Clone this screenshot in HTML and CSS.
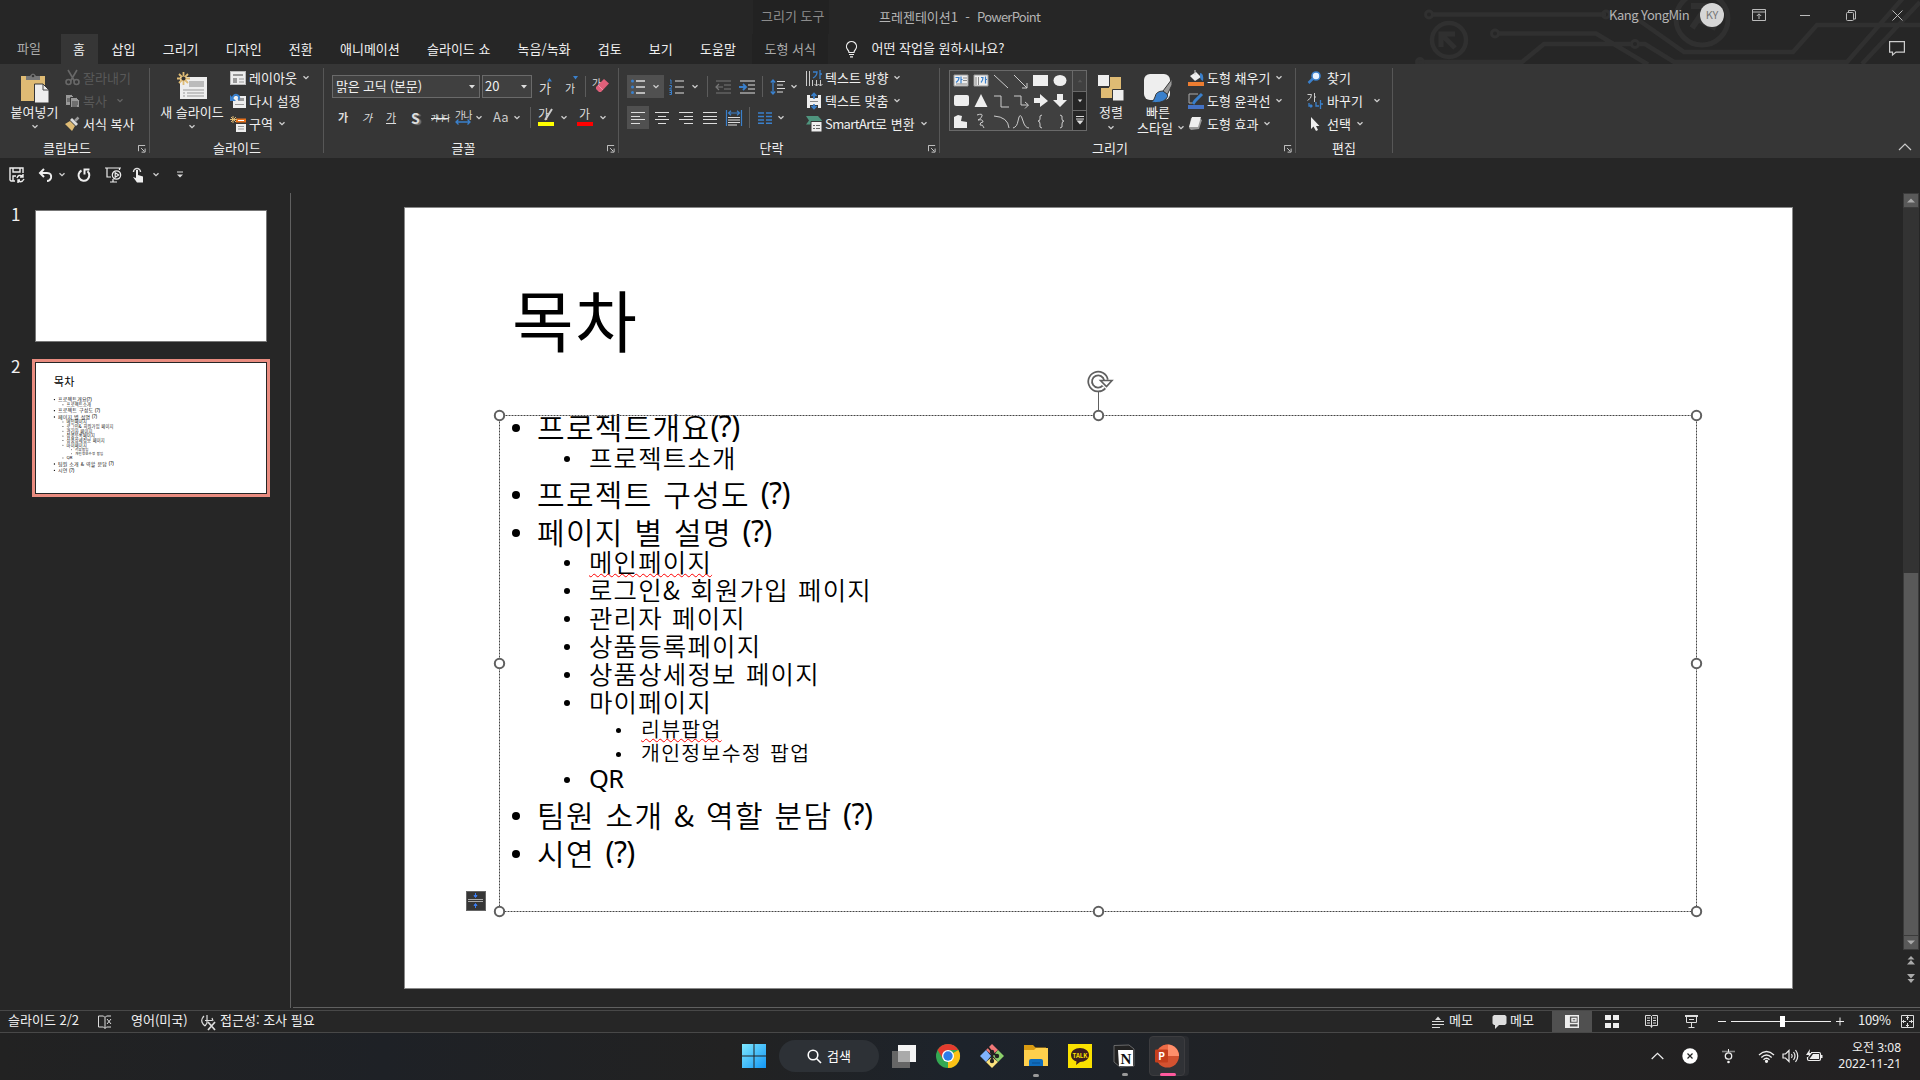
FILE: index.html
```html
<!DOCTYPE html>
<html lang="ko">
<head>
<meta charset="utf-8">
<title>프레젠테이션1 - PowerPoint</title>
<link rel="stylesheet" href="styles.css">
</head>
<body>
<svg class="defs" aria-hidden="true">
  <symbol id="chev" viewBox="0 0 8 6"><path d="M1.5 1.2 4 3.7 6.500 1.200" fill="none" stroke="#d0d0d0" stroke-width="1.300"/></symbol>
  <symbol id="launch" viewBox="0 0 9 9"><path d="M.5 7V.5H8M3.500 3.500 7 7M8 4v4H4" fill="none" stroke="#d8d8d8"/></symbol>
  <symbol id="tri" viewBox="0 0 8 5"><path d="M1 .5h6L4 4z" fill="#ddd"/></symbol>
</svg>

<header class="top">
  <svg class="circuit" viewBox="0 0 680 64" fill="none" stroke="#303030" stroke-width="4.500">
    <path d="M193 14.500H366M390 14l54 38h109l24-27h103M259 33.500h97l52 31M176 62h106l22-18H391M399 44h6l29 18h173L663-2M622 64 680 2"/>
    <circle cx="189" cy="14.500" r="3.500" stroke-width="3"/><circle cx="255" cy="33.500" r="3.500" stroke-width="3"/><circle cx="395" cy="44" r="3.500" stroke-width="3"/><circle cx="180" cy="62" r="3.500" stroke-width="3"/><circle cx="366" cy="14.500" r="3.500" stroke-width="3"/>
    <circle cx="209" cy="40" r="17"/><path d="M201 47V34h14M202 35l13 13" stroke-width="5"/>
    <circle cx="462" cy="19" r="26" stroke-width="5"/><path d="M451 6h17v15M467 6 452 28M460 20l16 8" stroke-width="6"/>
  </svg>
  <div class="titlebar">
    <span class="ctx-title">그리기 도구</span>
    <span class="doc">프레젠테이션1 &nbsp;-&nbsp; <span class="tight">PowerPoint</span></span>
    <span class="user">Kang YongMin</span>
    <span class="avatar">KY</span>
    <svg width="14" height="12" viewBox="0 0 14 12" fill="none" stroke="#bbb"><path d="M.5.5h13v11H.5zM.5 3h13M7 10V5M4.800 7 7 4.800 9.200 7"/></svg>
    <svg width="10" height="12" viewBox="0 0 10 12"><path d="M0 6.500h10" stroke="#bbb"/></svg>
    <svg width="10" height="11" viewBox="0 0 10 11" fill="none" stroke="#bbb"><rect x=".5" y="2.500" width="7" height="8" rx="1"/><path d="M2.500 2V.5H8Q9.500.5 9.500 2v7H8"/></svg>
    <svg width="11" height="11" viewBox="0 0 11 11"><path d="m.5.5 10 10m0-10-10 10" stroke="#bbb"/></svg>
  </div>
  <nav class="tabs">
    <span class="tab file">파일</span><span class="tab on">홈</span><span class="tab">삽입</span><span class="tab">그리기</span><span class="tab">디자인</span><span class="tab">전환</span><span class="tab">애니메이션</span><span class="tab">슬라이드 쇼</span><span class="tab">녹음/녹화</span><span class="tab">검토</span><span class="tab">보기</span><span class="tab">도움말</span><span class="tab shape">도형 서식</span>
    <svg class="bulb" width="13" height="17" viewBox="0 0 13 17" fill="none" stroke="#eee" stroke-width="1.200"><path d="M4 11.500Q4 10 2.500 8.500A5 5 0 1 1 10.500 8.500Q9 10 9 11.500zM4 13.500h5M5 15.800h3"/></svg>
    <span class="ask">어떤 작업을 원하시나요?</span>
    <svg class="comment" width="16" height="15" viewBox="0 0 16 15" fill="none" stroke="#ccc" stroke-width="1.200"><path d="M.6.6h14.800v10.500H7L3.500 14V11.100H.6z"/></svg>
  </nav>
</header>

<section class="ribbon">
  <div class="group g-clip">
    <div class="body">
      <div class="big">
        <svg width="28" height="30" viewBox="0 0 28 30"><rect y="3" width="24" height="25" fill="#dfbb74"/><path d="M5 7V3h4Q12-2 15 3h4v4z" fill="#777"/><circle cx="12" cy="3" r="1.300" fill="#363636"/><path d="M13.500 11H22l6 6v13H13.500z" fill="#eee" stroke="#363636"/><path d="M22 11v6h6" fill="none" stroke="#444"/></svg>
        <span>붙여넣기</span><svg class="ch"><use href="#chev"/></svg>
      </div>
      <div class="rows">
        <div class="r off"><svg width="15" height="16" viewBox="0 0 15 16" fill="none" stroke="#686868" stroke-width="1.600"><path d="m3 0 6.500 11M12 0 5.500 11"/><circle cx="3.500" cy="12" r="2.500"/><circle cx="11.500" cy="12" r="2.500"/></svg><span>잘라내기</span></div>
        <div class="r off copy"><svg width="15" height="14" viewBox="0 0 15 14" fill="#999" stroke="#363636"><path d="M.5.5h6l3 3v8h-9z"/><path d="M5.500 3.500h6l3 3v7h-9z"/><path d="M7 8h6M7 10h6M7 12h5M2 5h3M2 7h3" stroke="#444"/></svg><span>복사</span><svg class="ch"><use href="#chev"/></svg></div>
        <div class="r"><svg width="15" height="14" viewBox="0 0 15 14"><path d="m0 7 5-3 5 5-3 5z" fill="#dfbb74"/><path d="m5 3 2-2 6 6-2 2z" fill="#ddd"/><path d="m10 4 3.500-3.500" stroke="#999" stroke-width="2.500"/></svg><span>서식 복사</span></div>
      </div>
    </div>
    <div class="label">클립보드<svg class="la"><use href="#launch"/></svg></div>
  </div>

  <div class="group g-slide">
    <div class="body">
      <div class="big">
        <svg width="31" height="29" viewBox="0 0 31 29"><rect x="3" y="5" width="27" height="22" fill="#eee"/><path d="M12 9h15v6H12z" fill="#bbb"/><path d="M6 18h21M6 21h2m2 0h17M6 24h2m2 0h17" stroke="#999"/><path d="M6.500 0v13M0 6.500h13M2 2l9 9m0-9-9 9" stroke="#dfbb74" stroke-width="1.800"/><circle cx="6.500" cy="6.500" r="2" fill="#333"/></svg>
        <span>새 슬라이드</span><svg class="ch"><use href="#chev"/></svg>
      </div>
      <div class="rows">
        <div class="r"><svg width="16" height="14" viewBox="0 0 16 14"><path d="M0 0h16v14H0z" fill="#bbb"/><path d="M1 1h14v12H1z" fill="#eee"/><path d="M3 3h10v2H3zM3 7h4v5H3z" fill="#999"/><path d="M9 8h5M9 11h5" stroke="#999"/></svg><span>레이아웃</span><svg class="ch"><use href="#chev"/></svg></div>
        <div class="r"><svg width="16" height="15" viewBox="0 0 16 15"><path d="M3 3h13v12H3z" fill="#eee"/><path d="M8 5h6v3H8zM5 11h9v1H5z" fill="#999"/><path d="M2 6Q4 0 8 2.500 10 4 8.500 7" fill="none" stroke="#3a80cc" stroke-width="2"/><path d="M0 2v6h6z" fill="#3a80cc"/></svg><span>다시 설정</span></div>
        <div class="r"><svg width="16" height="16" viewBox="0 0 16 16"><path d="M6 8h10v8H6z" fill="#eee"/><path d="M8 10.500h6M8 13h6" stroke="#999"/><path d="M6 2.500h10v4H6z" fill="#e8701a"/><path d="M8 4.500h6" stroke="#fff"/><path d="M3 0v7M0 3.500h7M1 1l5 5m0-5L1 6" stroke="#dfbb74"/></svg><span>구역</span><svg class="ch"><use href="#chev"/></svg></div>
      </div>
    </div>
    <div class="label">슬라이드</div>
  </div>

  <div class="group g-font">
    <div class="line l1">
      <div class="combo name"><span>맑은 고딕 (본문)</span><svg class="ch"><use href="#tri"/></svg></div>
      <div class="combo size"><span>20</span><svg class="ch"><use href="#tri"/></svg></div>
      <span class="ga grow">가<svg width="5" height="4" viewBox="0 0 5 4"><path d="M0 3.500h5L2.500 0z" fill="#3a80cc"/></svg></span>
      <span class="ga shrink">가<svg width="5" height="4" viewBox="0 0 5 4"><path d="M0 0h5L2.500 3.500z" fill="#3a80cc"/></svg></span>
      <i class="sep"></i>
      <span class="ga clear">가<svg width="13" height="13" viewBox="0 0 13 13"><path d="m0 8 8-8 5 4.500L5 13H3L0 10z" fill="#e0607a"/><path d="m2 6 5 5" stroke="#f0a0b0" stroke-width=".8"/></svg></span>
    </div>
    <div class="line l2">
      <b class="ga">가</b><em class="ga">가</em><u class="ga">가</u><b class="shadow">S</b><s class="strike">가나다</s>
      <span class="ga spacing">가나<svg width="16" height="6" viewBox="0 0 16 6"><path d="M1 3h14M3.500.5 1 3l2.500 2.500M12.500.5 15 3l-2.500 2.500" fill="none" stroke="#3a80cc" stroke-width="1.300"/></svg></span><svg class="ch"><use href="#chev"/></svg>
      <span class="aa">Aa</span><svg class="ch"><use href="#chev"/></svg>
      <i class="sep"></i>
      <span class="ga mark hl">가<svg width="8" height="13" viewBox="0 0 8 13"><path d="M7 1 2 9l-2 3" stroke="#ccc" stroke-width="2" fill="none"/></svg></span><svg class="ch"><use href="#chev"/></svg>
      <span class="ga mark red">가</span><svg class="ch"><use href="#chev"/></svg>
    </div>
    <div class="label">글꼴<svg class="la"><use href="#launch"/></svg></div>
  </div>

  <div class="group g-para">
    <div class="pair">
      <div class="pl">
        <div class="line p1">
          <span class="act wide"><svg width="15" height="15" viewBox="0 0 15 15"><path d="M5 2h9M5 8h9M5 14h9" stroke="#ddd" stroke-width="1.300"/><g fill="#3a80cc"><circle cx="1.500" cy="2" r="1.500"/><circle cx="1.500" cy="8" r="1.500"/><circle cx="1.500" cy="13.500" r="1.500"/></g></svg><svg class="ch"><use href="#chev"/></svg></span>
          <svg width="16" height="16" viewBox="0 0 16 16"><path d="M6 2h9M6 8h9M6 14h9" stroke="#ddd" stroke-width="1.200"/><path d="M1 1h1v4M.5 6.500h2v1.500l-2 2h2.500M.5 11.500h2v4h-2m0-2h2" fill="none" stroke="#3a80cc"/></svg><svg class="ch"><use href="#chev"/></svg>
          <i class="sep"></i>
          <svg width="17" height="14" viewBox="0 0 17 14" stroke="#777" fill="none" stroke-width="1.200"><path d="M1 1h15M9 5h7M9 9h7M1 13h15M1 7h7M4 4 1 7l3 3"/></svg>
          <svg width="17" height="14" viewBox="0 0 17 14" stroke="#ddd" fill="none" stroke-width="1.200"><path d="M1 1h15M9 5h7M9 9h7M1 13h15"/><path d="M0 7h7M4 4l3 3-3 3" stroke="#3a80cc" stroke-width="1.800"/></svg>
          <i class="sep"></i>
          <svg width="16" height="16" viewBox="0 0 16 16" fill="none"><path d="M7 2.500h8M7 6h6M7 9.500h8M7 13h6" stroke="#ddd"/><path d="M3 1v14M.8 3.500 3 1l2.200 2.500M.8 12.500 3 15l2.200-2.500" stroke="#3a80cc" stroke-width="1.300"/></svg><svg class="ch"><use href="#chev"/></svg>
        </div>
        <div class="line p2">
          <span class="act"><svg width="14" height="12" viewBox="0 0 14 12" stroke="#ddd"><path d="M0 .5h14M0 4.500h9M0 7.500h14M0 11.500h9"/></svg></span>
          <svg width="14" height="12" viewBox="0 0 14 12" stroke="#ddd"><path d="M0 .5h14M3 4.500h8M0 7.500h14M3 11.500h8"/></svg>
          <svg width="14" height="12" viewBox="0 0 14 12" stroke="#ddd"><path d="M0 .5h14M5 4.500h9M0 7.500h14M5 11.500h9"/></svg>
          <svg width="14" height="12" viewBox="0 0 14 12" stroke="#ddd"><path d="M0 .5h14M0 4.500h14M0 7.500h14M0 11.500h14"/></svg>
          <svg width="16" height="16" viewBox="0 0 16 16" fill="none"><path d="M.5 0v16M15.500 0v16M2.500 3h11M5 .8 2.500 3 5 5.200M11 .8 13.500 3 11 5.200" stroke="#3a80cc" stroke-width="1.200"/><path d="M2 7.500h12M2 10h12M2 12.500h12M2 15h9" stroke="#ddd"/></svg>
          <i class="sep"></i>
          <svg width="14" height="12" viewBox="0 0 14 12" stroke="#3a80cc" stroke-width="1.400"><path d="M0 1h6m2 0h6M0 4.500h6m2 0h6M0 8h6m2 0h6M0 11.200h6m2 0h6"/></svg><svg class="ch"><use href="#chev"/></svg>
        </div>
      </div>
      <div class="rows">
        <div class="r"><svg width="16" height="17" viewBox="0 0 16 17" fill="none" stroke="#ccc"><path d="M.5 1v15M3.500 1v15M6.500 10v6M10.500 10v6M14.500 10v6M8.500 14l2 2 2-2M12.500 14l2 2 2-2"/><path d="M7 2h4q0 4-4 6M14 0v9M14 4h2" stroke="#3a80cc" stroke-width="1.300"/></svg><span>텍스트 방향</span><svg class="ch"><use href="#chev"/></svg></div>
        <div class="r"><svg width="16" height="16" viewBox="0 0 16 16"><path d="M1 2h3v3h8V2h3v13h-3v-3H4v3H1z" fill="#eee"/><path d="M4 8.500h8" stroke="#888"/><path d="M8 0v6M5.500 3 8 .5 10.500 3M8 11v5M5.500 13 8 15.500l2.500-2.500" stroke="#3a80cc" stroke-width="1.700" fill="none"/></svg><span>텍스트 맞춤</span><svg class="ch"><use href="#chev"/></svg></div>
        <div class="r"><svg width="16" height="16" viewBox="0 0 16 16"><path d="M0 0h12l4 4.500-4 4H0l3-4z" fill="#4f957e"/><path d="M5 5.500h11V16H5z" fill="#eee" stroke="#363636"/><path d="M7 9.500h2m1 0h4M7 12.500h2m1 0h4" stroke="#666"/></svg><span><span class="smart">SmartArt</span>로 변환</span><svg class="ch"><use href="#chev"/></svg></div>
      </div>
    </div>
    <div class="label">단락<svg class="la"><use href="#launch"/></svg></div>
  </div>

  <div class="group g-draw">
    <div class="body">
      <div class="gallery">
        <svg width="122" height="60" viewBox="0 0 122 60" fill="none" stroke="#ccc">
          <path d="M4 4h14v11H4zM24 4h14v11H24z" fill="#eee" stroke="#999"/><path d="M5.500 6.500H9q0 3-3 5M11 5.500v7m0-4h1.500M31 6.500h2q0 3-2 5M35.500 5.500v7m0-4H37" stroke="#3a80cc" stroke-width="1.200"/><path d="M13 7h4M13 9.500h4M6 13h11M26 6v8M28.500 6v8" stroke="#888"/>
          <path d="m44 4 14 13M64 4l13 13M77 12v5h-5"/>
          <g fill="#eee" stroke="none"><rect x="83" y="4" width="15" height="11"/><ellipse cx="110" cy="9.500" rx="6.500" ry="5.500"/><rect x="4" y="24" width="15" height="11" rx="2"/><path d="m31 23 6.500 13h-13zM84 27h6v-4l8 7-8 6v-4h-6zM107 23h6v6h4l-7 7-7-7h4zM4 46l4-2 4 1-1 5 6 1v6H4z"/></g>
          <path d="M44 25h7v11h8M64 25h7v9h7M75 31l3.500 3-3.500 3.500M27 44q6-2 5 1t-4 4q5-1 5 2-3 0-3 3 3-1 4 3M44 45q14 1 15 12M63 57q4-1 5-7 2-11 5 0 2 7 6 7M92 44q-3 0-2 4 0 2-2 2 2 0 2 3-1 4 2 4M110 44q3 0 2 4 0 2 2 2-2 0-2 3 1 4-2 4"/>
        </svg>
        <div class="gs"><span class="dim"><svg class="ch" viewBox="0 0 8 5"><path d="M1 4h6L4 .5z" fill="#555"/></svg></span><span><svg class="ch"><use href="#tri"/></svg></span><span><svg width="8" height="9" viewBox="0 0 8 9"><path d="M0 .5h8M0 3h8" stroke="#ddd"/><path d="M.5 4.500h7L4 8.500z" fill="#ddd"/></svg></span></div>
      </div>
      <div class="big b1">
        <svg width="28" height="28" viewBox="0 0 28 28"><path d="M12 3h12v12H12zM4 14h12v10H4z" fill="#dfbb74"/><path d="M.5.5h12v12H.5zM15.500 15.500h11.500v11.500H15.500z" fill="#eee" stroke="#363636"/></svg>
        <span>정렬</span><svg class="ch"><use href="#chev"/></svg>
      </div>
      <div class="big b2">
        <svg width="30" height="30" viewBox="0 0 30 30"><rect x="1" y="1" width="26" height="26" rx="6" fill="#eee"/><path d="m29 6-9 12 4 4 5-10z" fill="#999" stroke="#363636"/><path d="M20 18q-7 0-8 6-1 4-4 5 10 2 15-3 3-3 1-5z" fill="#3a80cc" stroke="#363636"/></svg>
        <span>빠른</span><span class="two">스타일<svg class="ch"><use href="#chev"/></svg></span>
      </div>
      <div class="rows">
        <div class="r"><svg width="16" height="16" viewBox="0 0 16 16"><path d="M0 12h16v4H0z" fill="#ed7d31"/><path d="m2 6 6-4 5 5-6 4z" fill="#eee"/><path d="M7 5V0" stroke="#ccc"/><path d="M12 3q4 0 3 8-3-1-3-5z" fill="#3a80cc"/></svg><span>도형 채우기</span><svg class="ch"><use href="#chev"/></svg></div>
        <div class="r"><svg width="16" height="16" viewBox="0 0 16 16"><path d="M0 12h16v4H0z" fill="#4472c4"/><path d="M10 1H1v9h3" stroke="#aaa" fill="none"/><path d="m14 1-7 7-2 3" stroke="#3a80cc" stroke-width="3" fill="none"/></svg><span>도형 윤곽선</span><svg class="ch"><use href="#chev"/></svg></div>
        <div class="r"><svg width="16" height="14" viewBox="0 0 16 14"><path d="M3 1h8l3 2-3 9-8 1-2-2z" fill="#999"/><path d="M4 0h9l-3 10H1z" fill="#eee"/></svg><span>도형 효과</span><svg class="ch"><use href="#chev"/></svg></div>
      </div>
    </div>
    <div class="label">그리기<svg class="la"><use href="#launch"/></svg></div>
  </div>

  <div class="group g-edit">
    <div class="body">
      <div class="rows">
        <div class="r"><svg width="16" height="14" viewBox="0 0 16 14"><path d="m1.500 12 5-5" stroke="#3a80cc" stroke-width="2.500"/><circle cx="9" cy="5" r="4" fill="#e8f2ff" stroke="#3a80cc" stroke-width="1.600"/></svg><span>찾기</span></div>
        <div class="r far"><svg width="16" height="16" viewBox="0 0 16 16" fill="none" stroke="#ccc"><path d="M.5 1.500h4q0 4-4 6M7.500 0v9m0-5H9"/><path d="M9 9v4h3M13.500 7v9m0-5H16M2 10v3h3M3.500 11.500 5 13l-1.500 1.500" stroke="#3a80cc" stroke-width="1.300"/></svg><span>바꾸기</span><svg class="ch"><use href="#chev"/></svg></div>
        <div class="r"><svg width="16" height="16" viewBox="0 0 16 16"><path d="M4 1v12l2.500-2.500L9 15l2-1-2-4h3.500z" fill="#eee"/></svg><span>선택</span><svg class="ch"><use href="#chev"/></svg></div>
      </div>
    </div>
    <div class="label">편집</div>
  </div>
  <svg class="collapse" width="14" height="8" viewBox="0 0 14 8"><path d="m1 7 6-6 6 6" fill="none" stroke="#ccc" stroke-width="1.200"/></svg>
</section>

<section class="qat">
  <svg width="16" height="16" viewBox="0 0 16 16" fill="none" stroke="#eee" stroke-width="1.400"><path d="M6 14H2L1 13V1h13v5M4 1v4h7V1M4 14V9h3"/><path d="M8 11q1-4 6-2m0-2v3h-3M15 12q-2 4-6 2m0 2v-3h2"/></svg>
  <svg width="15" height="14" viewBox="0 0 15 14" fill="none" stroke="#eee" stroke-width="2"><path d="M2 5h7q5 0 4 5-1 3-4 3M6 1 2 5l4 4"/></svg>
  <svg class="ch"><use href="#chev"/></svg>
  <svg width="14" height="14" viewBox="0 0 14 14" fill="none" stroke="#eee" stroke-width="2"><path d="M4.500 2.500a5.400 5.400 0 1 0 6 .8M7.500 6.500V1.500h5"/></svg>
  <svg width="17" height="16" viewBox="0 0 17 16" fill="none" stroke="#eee" stroke-width="1.200"><path d="M0 1h16M2 1v9h4M14.500 1v2M5 15h7M8 12v3"/><circle cx="11.500" cy="8" r="4.200"/><path d="m10.200 5.800 3.500 2.200-3.500 2.200z"/></svg>
  <svg width="12" height="17" viewBox="0 0 12 17"><path d="M1.500 6a3.500 3.500 0 1 1 7 0" fill="none" stroke="#ddd" stroke-width="1.500"/><path d="M4 4h2v5l5 1.500v6H5L1 11l3 1z" fill="#eee"/></svg>
  <svg class="ch"><use href="#chev"/></svg>
  <svg width="6" height="7" viewBox="0 0 6 7"><path d="M0 1h6" stroke="#ddd"/><path d="M0 3.500h6L3 6.500z" fill="#ddd"/></svg>
</section>

<main class="work">
  <aside class="thumbs">
    <span class="num">1</span><div class="thumb"></div>
    <span class="num second">2</span>
    <div class="thumb sel"><div class="mini"><div class="content">
      <h1>목차</h1>
      <ul>
        <li class="a">프로젝트개요<q>(?)</q></li><li class="b">프로젝트소개</li><li class="a">프로젝트 구성도 <q>(?)</q></li><li class="a">페이지 별 설명 <q>(?)</q></li>
        <li class="b">메인페이지</li><li class="b">로그인&amp; 회원가입 페이지</li><li class="b">관리자 페이지</li><li class="b">상품등록페이지</li><li class="b">상품상세정보 페이지</li><li class="b">마이페이지</li>
        <li class="c">리뷰팝업</li><li class="c">개인정보수정 팝업</li><li class="b"><q>QR</q></li><li class="a">팀원 소개 &amp; 역할 분담 <q>(?)</q></li><li class="a">시연 <q>(?)</q></li>
      </ul>
    </div></div></div>
  </aside>
  <div class="stage">
    <div class="slide">
      <div class="content">
        <h1>목차</h1>
        <ul>
          <li class="a">프로젝트개요<q>(?)</q></li><li class="b">프로젝트소개</li><li class="a">프로젝트 구성도 <q>(?)</q></li><li class="a">페이지 별 설명 <q>(?)</q></li>
          <li class="b"><span class="err">메인페이지</span></li><li class="b">로그인&amp; 회원가입 페이지</li><li class="b">관리자 페이지</li><li class="b">상품등록페이지</li><li class="b">상품상세정보 페이지</li><li class="b">마이페이지</li>
          <li class="c"><span class="err">리뷰팝업</span></li><li class="c">개인정보수정 팝업</li><li class="b"><q>QR</q></li><li class="a">팀원 소개 &amp; 역할 분담 <q>(?)</q></li><li class="a">시연 <q>(?)</q></li>
        </ul>
      </div>
      <svg class="selection" width="1240" height="560" viewBox="0 0 1240 560" fill="none" stroke="#606060">
        <path d="M29.500 45.500h1197v496h-1197z" stroke="#444" stroke-dasharray="2 1"/>
        <path d="M628.500 20v20"/>
        <g fill="#fff" stroke-width="2"><circle cx="29.500" cy="45.500" r="4.700"/><circle cx="628.500" cy="45.500" r="4.700"/><circle cx="1226.500" cy="45.500" r="4.700"/><circle cx="29.500" cy="293.500" r="4.700"/><circle cx="1226.500" cy="293.500" r="4.700"/><circle cx="29.500" cy="541.500" r="4.700"/><circle cx="628.500" cy="541.500" r="4.700"/><circle cx="1226.500" cy="541.500" r="4.700"/></g>
        <path d="M634 17a8 8 0 1 1 2-7" stroke-width="5.500"/><path d="M634 17a8 8 0 1 1 2-7" stroke="#fff" stroke-width="2"/><path d="M630.500 10.500h11.500l-5.500 6z" fill="#fff" stroke-width="1.600"/>
      </svg>
      <svg class="autofit" width="20" height="20" viewBox="0 0 20 20"><rect x=".5" y=".5" width="19" height="19" fill="#363636" stroke="#666"/><path d="M2 8.500h15M2 10.500h15" stroke="#aaa"/><path d="M9.500 2v4M8 4.500l1.500 2 1.500-2zM9.500 17v-4M8 14.500l1.500-2 1.500 2z" stroke="#3a7cf0" fill="#3a7cf0"/></svg>
    </div>
    <div class="scroll">
      <span class="sb"><svg width="8" height="5" viewBox="0 0 8 5"><path d="M0 4.500h8L4 .5z" fill="#aaa"/></svg></span>
      <span class="track"></span><span class="knob"></span>
      <span class="sb"><svg width="8" height="5" viewBox="0 0 8 5"><path d="M0 .5h8L4 4.500z" fill="#aaa"/></svg></span>
      <svg class="pg" width="8" height="9" viewBox="0 0 8 9" fill="#aaa"><path d="M4 0 7.500 3.500h-7zM4 4l4 4.500H0z"/></svg>
      <svg class="pg" width="8" height="9" viewBox="0 0 8 9" fill="#aaa"><path d="M0 0h8L4 4.500zM.5 5h7L4 9z"/></svg>
    </div>
  </div>
</main>

<footer class="status">
  <span>슬라이드 2/2</span>
  <svg width="15" height="14" viewBox="0 0 15 14" fill="none" stroke="#ddd"><path d="M7 2.500 5.500 1H.5v11h5L7 13.500V2.500L8.500 1H13M7 13.500 8.500 12H13M9 4l4 5m0-5-4 5"/></svg>
  <span>영어(미국)</span>
  <svg width="17" height="16" viewBox="0 0 17 16" fill="none" stroke="#ddd" stroke-width="1.200"><path d="M4 2q-4 4-1 8l2 2M7 1v4M5 6.500h7M7 5v4l-2 3M12 4l1 3"/><path d="m8 8 7 8m0-8-7 8" stroke-width="1.700"/></svg>
  <span>접근성: 조사 필요</span>
  <svg width="12" height="12" viewBox="0 0 12 12"><path d="M3 4h6L6 .5z" fill="#ddd"/><path d="M0 5.500h12M0 8.500h12M0 11.500h8" stroke="#ddd"/></svg>
  <span>메모</span>
  <svg width="15" height="14" viewBox="0 0 15 14"><path d="M2 0h11l1.500 1.500v7L13 10H7l-4 4v-4H2L.5 8.500v-7z" fill="#ddd"/></svg>
  <span>메모</span>
  <span class="view"><svg width="14" height="13" viewBox="0 0 14 13" fill="none" stroke="#eee" stroke-width="1.400"><path d="M.7.7h12.600v11.600H.7zM4 1v11M4 8.500h9"/><path d="M1 1h3v11H1z" fill="#eee"/><path d="M7 3.500h4v2.500H7z"/></svg></span>
  <svg width="14" height="13" viewBox="0 0 14 13" fill="#eee"><path d="M0 0h6v5H0zM8 0h6v5H8zM0 8h6v5H0zM8 8h6v5H8z"/></svg>
  <svg width="13" height="13" viewBox="0 0 13 13" fill="none" stroke="#ddd"><path d="M.5.5h5l1 1 1-1h5v10h-5l-1 2-1-2h-5zM6.500 1v11M2 3h3M2 5.500h3M2 8h3M8 3h3M8 5.500h3M8 8h3"/></svg>
  <svg width="13" height="13" viewBox="0 0 13 13" fill="none" stroke="#ddd"><path d="M0 1h13" stroke-width="2"/><path d="M1.500 1v6.500h10V1M4 4.500h5M6.500 8v4M3.500 12.500h6"/></svg>
  <svg width="8" height="12" viewBox="0 0 8 12"><path d="M0 5.500h8" stroke="#eee"/></svg>
  <span class="slider"><i></i></span>
  <svg width="8" height="12" viewBox="0 0 8 12"><path d="M0 5.500h8M4 1.500v8" stroke="#eee"/></svg>
  <span class="pct">109%</span>
  <svg width="13" height="13" viewBox="0 0 13 13" fill="none" stroke="#ddd"><path d="M.5.5h12v12H.5zM6.500 1v4M5 3l1.500-1.500L8 3M6.500 12V8M5 10l1.500 1.500L8 10M1 6.500h4M3 5 1.500 6.500 3 8M12 6.500H8M10 5l1.500 1.500L10 8"/></svg>
</footer>

<footer class="taskbar">
  <svg width="24" height="24" viewBox="0 0 24 24"><defs><linearGradient id="win" x2="1" y2="1"><stop stop-color="#7ee8ff"/><stop offset="1" stop-color="#1296f5"/></linearGradient></defs><path d="M0 0h11.500v11.500H0zM12.500 0H24v11.500H12.500zM0 12.500h11.500V24H0zM12.500 12.500H24V24H12.500z" fill="url(#win)"/></svg>
  <span class="search"><svg width="15" height="15" viewBox="0 0 15 15" fill="none" stroke="#fff" stroke-width="1.600"><circle cx="6" cy="6" r="4.800"/><path d="m9.500 9.500 4.500 4.500"/></svg>검색</span>
  <svg width="24" height="23" viewBox="0 0 24 23"><path d="M0 6h18v17H0z" fill="#666"/><path d="M6 0h18v17H6z" fill="#f4f4f4"/><path d="M6 6h12v11H6z" fill="#aaa"/></svg>
  <svg width="24" height="24" viewBox="0 0 24 24"><circle cx="12" cy="12" r="12" fill="#34a853"/><path d="M12 12V24A12 12 0 0 0 22.400 6z" fill="#fbc116"/><path d="M1.600 6a12 12 0 0 1 20.800 0H12l-5 9z" fill="#e33b2e"/><circle cx="12" cy="12" r="6" fill="#fff"/><circle cx="12" cy="12" r="4.700" fill="#2b7de9"/></svg>
  <svg width="24" height="24" viewBox="0 0 24 24"><path d="m12 0 6 6-6 5-6-5z" fill="#f27878"/><path d="m24 12-6 6-5-6 5-6z" fill="#8ccf6b"/><path d="m12 24-6-6 6-5 6 5z" fill="#fae17d"/><path d="m0 12 6-6 5 6-5 6z" fill="#80b3ff"/><path d="m8 3 4 5v10M12 8l6 5" stroke="#222" stroke-width="1.800" fill="none"/><g fill="#222"><circle cx="12" cy="8" r="2.200"/><circle cx="12" cy="17" r="2.200"/><circle cx="17" cy="12" r="2.200"/></g></svg>
  <span class="app"><svg width="24" height="22" viewBox="0 0 24 22"><path d="M0 0h9l2.500 2.500H22v6H0z" fill="#d99b12"/><path d="M0 5h10l2-2h12v18H0z" fill="#ffd04c"/><path d="M5 21v-5q0-2 2-2h10q2 0 2 2v5z" fill="#0f6cbd"/><path d="M8 18h8" stroke="#0a4f92"/></svg></span>
  <svg width="24" height="24" viewBox="0 0 24 24"><path d="M0 0h24v24H0z" fill="#fae100"/><path d="M12 4c5 0 9 3 9 7s-4 7-9 7l-4 3 .5-3.500C5 16.500 3 14 3 11c0-4 4-7 9-7z" fill="#3b1e1e"/><text x="12" y="13.500" font-size="6" font-weight="700" text-anchor="middle" fill="#fae100">TALK</text></svg>
  <span class="app"><svg width="22" height="24" viewBox="0 0 22 24"><path d="M1 1.500 16 1l5 4v17l-14 1-6-5z" fill="#222" stroke="#888" stroke-width=".7"/><path d="M5 6h15v16H6z" fill="#fff"/><text x="12.800" y="19.500" font-size="15" font-family="Liberation Serif" font-weight="700" text-anchor="middle" fill="#111">N</text></svg></span>
  <span class="app live"><svg width="24" height="24" viewBox="0 0 24 24"><circle cx="12.500" cy="12" r="11.500" fill="#d35230"/><path d="M13 .5A11.500 11.500 0 0 1 24 12H13z" fill="#ff8f6b"/><path d="M13 .5A11.500 11.500 0 0 0 1.500 12H13z" fill="#ed6c47"/><rect y="5.500" width="13" height="13" rx="1" fill="#c43e1c"/><text x="6.500" y="15.500" font-size="10" font-weight="700" text-anchor="middle" fill="#fff">P</text></svg></span>
  <svg width="13" height="8" viewBox="0 0 13 8"><path d="m.7 7 5.800-5.700L12.300 7" fill="none" stroke="#eee" stroke-width="1.200"/></svg>
  <svg width="16" height="16" viewBox="0 0 16 16"><circle cx="8" cy="8" r="7.700" fill="#fff"/><path d="m5.500 5.500 5 5m0-5-5 5" stroke="#222" stroke-width="1.200"/></svg>
  <svg width="13" height="16" viewBox="0 0 13 16" fill="none"><path d="M0 3.500h13" stroke="#888" stroke-width="1.600"/><path d="M6.500 1v3" stroke="#eee"/><circle cx="6.500" cy="8" r="3.200" stroke="#eee" stroke-width="1.300"/><circle cx="6.500" cy="14" r="1.300" fill="#eee"/></svg>
  <svg width="17" height="13" viewBox="0 0 17 13" fill="none" stroke="#eee" stroke-width="1.300"><path d="M1 5q7.500-7 15 0M3.300 7.500q5.200-5 10.400 0M5.500 9.800q3-3 6 0"/><circle cx="8.500" cy="11.300" r="1" fill="#eee"/></svg>
  <svg width="17" height="14" viewBox="0 0 17 14" fill="none" stroke="#eee" stroke-width="1.200"><path d="M1 5h2.500L7 1.500v11L3.500 9H1zM9.500 5q1.500 2 0 4M11.500 3q3 4 0 8M13.500 1q4.500 6 0 12"/></svg>
  <svg width="17" height="14" viewBox="0 0 17 14"><path d="M5 3.500h8q1.500 0 1.500 1.500v5q0 1.500-1.500 1.500H3Q1.500 11.500 1.500 10V8" fill="none" stroke="#eee" stroke-width="1.200"/><path d="M7 5h6v5H3.500z" fill="#eee"/><path d="M15 6h1.500v3H15z" fill="#eee"/><path d="M4 0 0 6h3L2 9l4-5H3.500z" fill="#eee"/></svg>
  <span class="clock">오전 3:08<br>2022-11-21</span>
</footer>
</body>
</html>
```
FILE: styles.css
```css
* { box-sizing: border-box; }
body { margin: 0; width: 1920px; height: 1080px; overflow: hidden; background: #262626; color: #f0f0f0; font: 13px/16px "Noto Sans CJK KR", "Noto Sans", sans-serif; white-space: nowrap; display: flex; flex-direction: column; }
svg { display: block; flex: none; overflow: visible; }
.defs { position: absolute; width: 0; height: 0; }
.ch { width: 8px; height: 6px; }

/* title and tabs */
.top { position: relative; height: 64px; }
.circuit { position: absolute; left: 1240px; top: 0; width: 680px; height: 64px; overflow: hidden; }
.titlebar { position: relative; height: 34px; display: grid; grid-template-columns: 126px 730px 91px 52px 48px 46px 46px auto; padding-left: 753px; align-items: center; color: #b4b4b4; }
.titlebar > * { margin-top: -4px; }
.titlebar > .ctx-title { margin-top: 0; align-self: stretch; width: 76px; padding: 8px 0 0 8px; background: #222; color: #8c8c8c; }
.titlebar .doc { margin-top: 0; }
.tight { letter-spacing: -.75px; }
.user { letter-spacing: -.5px; }
.avatar { width: 24px; height: 24px; border-radius: 50%; background: #d6d6d6; color: #777; font-size: 11px; line-height: 23px; text-align: center; }
.tabs { position: relative; height: 30px; display: flex; }
.tab { padding: 0 13.6px; line-height: 29px; }
.file { width: 61px; padding-left: 17px; line-height: 28px; color: #aaa; }
.on { width: 37px; padding: 0 12px; background: #363636; }
.tab.shape { width: 76px; margin-left: 3px; padding: 0 12px; background: #222; color: #aaa; }
.bulb { margin: 7px 13px 0 17px; }
.ask { line-height: 28px; }
.comment { margin: 7px 15px 0 auto; }

/* ribbon */
.ribbon { height: 94px; background: #363636; padding: 4px 0 5px; display: grid; grid-template-columns: 150px 174px 295px 321px 356px 97px 1fr; }
.group { border-right: 1px solid #575757; display: flex; flex-direction: column; }
.body, .pair { height: 72px; display: grid; }
.g-clip .body { grid-template-columns: 65px auto; }
.g-slide .body { grid-template-columns: 80px auto; }
.g-draw .body { grid-template-columns: 148px 46px 54px auto; }
.g-edit .body { padding-left: 11px; }
.pair { grid-template-columns: 187px auto; }
.label { position: relative; height: 13px; text-align: center; }
.g-clip .label { padding-right: 15px; }
.g-slide .label { padding-left: 1px; }
.g-font .label, .g-draw .label, .g-para .label { padding-right: 15px; }
.la { position: absolute; right: 3px; top: 5px; width: 8px; height: 8px; }
.big { display: flex; flex-direction: column; align-items: center; padding-top: 4px; }
.big > svg:first-child { height: 32px; }
.big > .ch { margin-top: 4px; }
.g-clip .big { padding-left: 4px; }
.g-slide .big { padding: 1px 0 0 4px; }
.g-slide .big > svg:first-child { height: 35px; }
.b1 > .ch { margin-top: 5px; }
.big.b2 { padding-right: 6px; }
.two { display: flex; align-items: center; gap: 4px; margin-left: 6px; }
.rows { display: grid; grid-template-rows: 20.5px 24px 23px; height: 68px; }
.r { display: flex; align-items: center; gap: 3px; }
.r .ch { margin-left: 2px; }
.g-edit .r { gap: 4px; }
.g-edit .r .ch { margin-left: 1px; }
.g-edit .r.far .ch { margin-left: 6px; }
.r.off { color: #595959; }
.copy .ch { margin-left: 6px; opacity: .3; }
.smart { letter-spacing: -.6px; }
.line { height: 23px; display: grid; align-items: center; justify-items: start; }
.l1 { margin: 7px 0 8px; padding-left: 8px; grid-template-columns: 150px 57px 26px 20px 7px auto; }
.l2 { height: 34px; padding: 0 0 11px 14px; grid-template-columns: 24px 24px 25px 20px 24px 20px 18px 20px 17px 8px 22px 17px 22px auto; }
.combo { display: flex; align-items: center; justify-content: space-between; height: 23px; border: 1px solid #6a6a6a; background: #404040; padding: 0 3px; }
.combo span { margin-top: -1px; }
.combo.name { width: 148px; }
.combo.name span { letter-spacing: -.2px; }
.combo.size { width: 50px; padding-left: 2px; }
.sep { width: 1px; height: 21px; background: #5c5c5c; }
.ga { position: relative; font-size: 12px; color: #ddd; }
.grow { font-size: 13px; padding-top: 2px; }
.grow svg { position: absolute; right: -1px; top: 0; }
.shrink { font-size: 11px; padding-top: 3px; }
.shrink svg { position: absolute; right: -3px; top: -1px; }
.clear { font-size: 10px; top: -4px; }
.clear svg { position: absolute; left: 4px; top: 4px; }
.l2 b.ga, .l2 em, .l2 u { font-size: 11px; top: -1px; }
.shadow { font-size: 14px; color: #ddd; text-shadow: 2px 1px 1px #777; }
.strike { font-size: 8px; width: 17px; letter-spacing: -1.5px; color: #eee; }
.spacing { font-size: 10px; letter-spacing: -1px; top: -3px; }
.spacing svg { position: absolute; left: 0; top: 12px; }
.aa { color: #ccc; margin-top: -2px; }
.mark { width: 16px; top: -4px; font-size: 12px; }
.mark.red { padding-left: 2px; }
.mark::after { content: ""; position: absolute; left: 0; right: 0; top: 16px; height: 4px; background: red; }
.mark.hl::after { background: #ff0; }
.hl svg { position: absolute; left: 7px; top: 2px; }
.p1 { margin: 7px 0 8px; padding-left: 8px; grid-template-columns: 42px 22px 16px 8px 24px 23px 8px 20px auto; }
.p2 { padding-left: 8px; grid-template-columns: 28px 24px 24px 23px 23px 9px 19px auto; }
.act { width: 22px; height: 23px; padding-left: 4px; background: #505050; display: flex; align-items: center; gap: 6px; }
.act.wide { width: 37px; }
.gallery { width: 138px; height: 61px; margin: 2px 0 0 9px; border: 1px solid #696969; display: flex; background: #404040; }
.gs { width: 14px; border-left: 1px solid #696969; display: grid; grid-template-rows: 21px 19px 19px; background: #262626; }
.gs span { display: grid; place-items: center; border-bottom: 1px solid #696969; }
.gs .dim { background: #404040; }
.gs span:last-child { border: 0; }
.gs .ch { width: 6px; height: 4px; }
.collapse { align-self: end; justify-self: end; margin: 0 8px 2px 0; }

/* quick access */
.qat { height: 35px; padding: 0 0 2px 9px; display: grid; grid-template-columns: 29px 20px 19px 28px 27px 20px 25px auto; align-items: center; }

/* workspace */
.work { height: 817px; display: grid; grid-template-columns: 291px 1fr; }
.thumbs { border-right: 1px solid #606060; display: grid; grid-template-columns: 24px 238px; grid-template-rows: 154px 140px; padding: 12px 0 0 11px; margin-bottom: 2px; }
.num { font-size: 17px; line-height: 18px; }
.num.second { line-height: 14px; }
.thumb { margin: 5px 0 0 0; width: 232px; height: 132px; background: #fff; border: 1px solid #777; }
.thumb.sel { margin: 0 0 0 -3px; width: 238px; height: 138px; border: 3px solid #e98c80; box-shadow: inset 0 0 0 1px #262626; padding: 1px; }
.mini { width: 230px; height: 130px; overflow: hidden; }
.mini .content { transform: scale(.1661); transform-origin: 0 0; }
.stage { display: flex; border-bottom: 1px solid #606060; margin: 0 0 2px 2px; height: 815px; }
.slide { position: relative; width: 1389px; height: 782px; margin: 14px 111px 0 111px; border: 1px solid #888; background: #fff; flex: none; }
.content { width: 1387px; height: 780px; color: #000; font-family: "Noto Sans CJK KR DemiLight", "Noto Sans CJK KR", sans-serif; font-weight: 350; }
.content h1 { margin: 0; padding: 70px 0 0 107px; height: 202px; font-family: "Noto Sans CJK KR", sans-serif; font-size: 67px; line-height: 80px; font-weight: 400; letter-spacing: 1.6px; }
.content ul { margin: 0; padding: 0; list-style: none; }
.content li { display: flex; align-items: center; white-space: pre; word-spacing: 1px; }
.content li::before { content: ""; border-radius: 50%; background: #000; flex: none; position: relative; top: 2px; }
.a { font-size: 30px; height: 32px; letter-spacing: 1.3px; padding-left: 107px; margin-top: 6px; }
.a:first-child { margin: 0 0 1px; }
.a::before { width: 8px; height: 8px; margin-right: 17px; }
.b, .c { line-height: 18px; }
.b { font-size: 25.5px; height: 28px; letter-spacing: 1.15px; padding: 0 0 0 159px; }
.b::before { width: 6px; height: 6px; margin-right: 19px; }
.c { font-size: 20.5px; height: 24px; letter-spacing: 1.3px; padding: 2px 0 0 211px; }
.c::before { width: 5px; height: 5px; margin-right: 20px; }
.b:nth-child(13) { margin-top: 1px; }
q { quotes: none; font-family: "Noto Sans"; font-weight: 400; letter-spacing: -.6px; }
.err { text-decoration: underline wavy #f00 1px; text-underline-offset: 1px; text-decoration-skip-ink: none; }
.selection { position: absolute; left: 65px; top: 162px; }
.autofit { position: absolute; left: 61px; top: 683px; }
.scroll { width: 16px; display: flex; flex-direction: column; background: #262626; margin-left: -1px; }
.sb { height: 15px; background: #595959; border: 1px solid #3b3b3b; display: grid; place-items: center; }
.track { height: 365px; background: #333; }
.knob { height: 362px; background: #595959; border: solid #3b3b3b; border-width: 0 1px; }
.pg { margin: 6px auto 3px; }

/* status */
.status { height: 23px; border: solid #484848; border-width: 1px 0; padding-left: 8px; display: grid; align-items: center; grid-template-columns: 90px 33px 69px 20px 1212px 17px 43px 18px 42px 53px 40px 40px 33px 13px 105px 22px 43px auto; }
.status > span:not(.view):not(.slider) { margin-top: -3px; }
.status > .pct { letter-spacing: -.2px; }
.view { width: 40px; height: 21px; background: #505050; display: grid; place-items: center; }
.slider { position: relative; width: 100px; height: 1px; background: #eee; }
.slider i { position: absolute; left: 49px; top: -5px; width: 5px; height: 11px; background: #fff; }

/* taskbar */
.taskbar { height: 47px; background: linear-gradient(90deg, #222 0, #1e2126 20%, #222 38%, #1d232b 50%, #1e2228 58%, #222 70%, #232122 100%); padding: 0 0 1px 742px; display: grid; align-items: center; grid-template-columns: 37px 113px 44px 44px 44px 44px 45px 35px 503px 31px 40px 36px 24px 24px 17px auto; }
.search { width: 100px; height: 32px; border-radius: 16px; background: #2d3136; display: flex; align-items: center; justify-content: center; gap: 5px; color: #fff; }
.app { position: relative; }
.app::after { content: ""; position: absolute; left: 9px; top: 29px; width: 6px; height: 3px; border-radius: 2px; background: #999; }
.live { width: 36px; height: 40px; margin-left: 1px; border-radius: 4px; background: #303236; border: 1px solid #3c3c3f; display: grid; place-items: center; box-shadow: 4px 0 0 #2a2c30; }
.live::after { left: 10px; top: 36px; width: 16px; background: #ff5a9e; }
.clock { text-align: right; padding-right: 19px; font: 12px/16px "Noto Sans", "Noto Sans CJK KR", sans-serif; }
```
